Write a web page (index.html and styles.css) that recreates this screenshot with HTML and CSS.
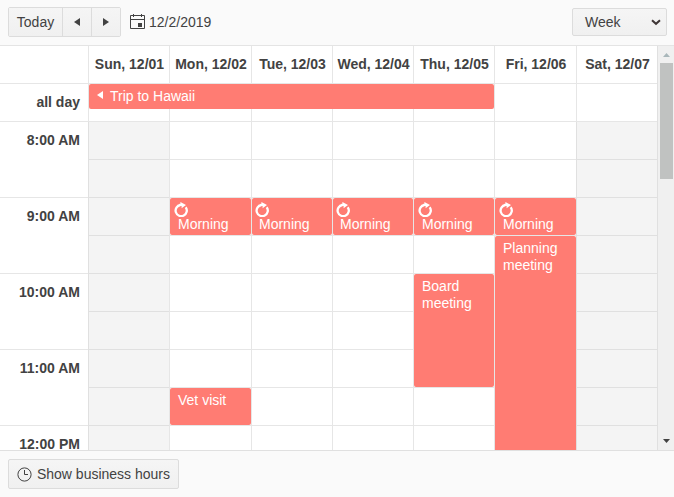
FILE: index.html
```html
<!DOCTYPE html>
<html lang="en">
<head>
<meta charset="utf-8">
<title>Scheduler</title>
<link rel="stylesheet" href="styles.css">
</head>
<body>
<svg class="defs" width="0" height="0" aria-hidden="true">
  <symbol id="reload" viewBox="0 0 14 15">
    <path d="M11.7 5.2A5.6 5.6 0 1 1 6.4 3" fill="none" stroke="currentColor" stroke-width="2.3"/>
    <path d="M6.4 0L12 2.9L7.6 6.2V4.1H5V2L6.4 1.8Z" fill="currentColor"/>
  </symbol>
</svg>
<div class="scheduler">
  <header class="toolbar">
    <div class="nav">
      <button class="btn today">Today</button>
      <button class="btn arrow"><svg width="6" height="8" viewBox="0 0 6 8"><path d="M6 0v8L0 4z"/></svg></button>
      <button class="btn arrow"><svg width="6" height="8" viewBox="0 0 6 8"><path d="M0 0v8l6-4z"/></svg></button>
    </div>
    <svg class="calendar" width="15" height="16" viewBox="0 0 15 16"><path d="M.5 1.5h14v13H.5zM.5 5.5h14" fill="none" stroke="#424242"/><path d="M3 0h1v3H3zM11 0h1v3h-1zM2 1h3v1H2zM10 1h3v1h-3zM8 9h4v4H8z" fill="#424242"/></svg>
    <span class="date">12/2/2019</span>
    <div class="view"><span>Week</span><svg width="10" height="7" viewBox="0 0 10 7"><path d="M1 1.2l4 3.6 4-3.6" fill="none" stroke="#3f3636" stroke-width="2"/></svg></div>
  </header>
  <main class="content">
    <div class="stage">
      <div class="layer cells">
        <div class="corner"></div>
        <div class="head">Sun, 12/01</div><div class="head">Mon, 12/02</div><div class="head">Tue, 12/03</div><div class="head">Wed, 12/04</div><div class="head">Thu, 12/05</div><div class="head">Fri, 12/06</div><div class="head">Sat, 12/07</div>
        <div class="time allday">all day</div>
        <i></i><i></i><i></i><i></i><i></i><i></i><i></i>
        <div class="time hour">8:00 AM</div>
        <i class="off"></i><i></i><i></i><i></i><i></i><i></i><i class="off"></i>
        <i class="off"></i><i></i><i></i><i></i><i></i><i></i><i class="off"></i>
        <div class="time hour">9:00 AM</div>
        <i class="off"></i><i></i><i></i><i></i><i></i><i></i><i class="off"></i>
        <i class="off"></i><i></i><i></i><i></i><i></i><i></i><i class="off"></i>
        <div class="time hour">10:00 AM</div>
        <i class="off"></i><i></i><i></i><i></i><i></i><i></i><i class="off"></i>
        <i class="off"></i><i></i><i></i><i></i><i></i><i></i><i class="off"></i>
        <div class="time hour">11:00 AM</div>
        <i class="off"></i><i></i><i></i><i></i><i></i><i></i><i class="off"></i>
        <i class="off"></i><i></i><i></i><i></i><i></i><i></i><i class="off"></i>
        <div class="time last">12:00 PM</div>
        <i class="off last"></i><i class="last"></i><i class="last"></i><i class="last"></i><i class="last"></i><i class="last"></i><i class="off last"></i>
      </div>
      <div class="layer">
        <div class="event trip"><svg width="6" height="8" viewBox="0 0 6 8"><path d="M6 0v8L0 4z"/></svg>Trip to Hawaii</div>
        <div class="event morning mon"><svg><use href="#reload"/></svg><span>Morning</span></div>
        <div class="event morning tue"><svg><use href="#reload"/></svg><span>Morning</span></div>
        <div class="event morning wed"><svg><use href="#reload"/></svg><span>Morning</span></div>
        <div class="event morning thu"><svg><use href="#reload"/></svg><span>Morning</span></div>
        <div class="event morning fri"><svg><use href="#reload"/></svg><span>Morning</span></div>
        <div class="event planning">Planning meeting</div>
        <div class="event board">Board meeting</div>
        <div class="event vet">Vet visit</div>
      </div>
    </div>
    <div class="scrollbar">
      <svg width="7" height="4" viewBox="0 0 7 4"><path d="M0 4h7L3.5 0z" fill="#a9b7ba"/></svg>
      <div class="thumb"></div>
      <svg class="down" width="7" height="4" viewBox="0 0 7 4"><path d="M0 0h7L3.5 4z" fill="#424242"/></svg>
    </div>
  </main>
  <footer class="footer">
    <button class="btn hours"><svg width="15" height="15" viewBox="0 0 15 15"><g fill="none" stroke="#424242"><circle cx="7.5" cy="7.5" r="6.6"/><path d="M7.5 3v4.5H11"/></g></svg>Show business hours</button>
  </footer>
</div>
</body>
</html>
```

FILE: styles.css
```css
* { box-sizing: border-box; }
body { margin: 0; font: 14px/17px "Liberation Sans", Arial, sans-serif; color: #424242; }
.defs { position: absolute; }
.scheduler { width: 674px; height: 497px; display: flex; flex-direction: column; overflow: hidden; background: #fff; }
.toolbar { flex: 0 0 46px; display: flex; align-items: flex-start; padding: 7px 7px 0 8px; background: #fafafa; border-bottom: 1px solid #e4e4e4; }
.nav { display: flex; border: 1px solid #dcdcdc; border-radius: 2px; height: 30px; }
.btn { font: inherit; color: inherit; padding: 0; border: 0; display: flex; align-items: center; justify-content: center; background: linear-gradient(#f5f5f5, #f0f0f0); }
.today { width: 53px; }
.arrow { width: 29px; border-left: 1px solid #dcdcdc; fill: #424242; }
.calendar { margin: 7px 4px 0 9px; }
.date { margin-top: 7px; }
.view { margin: 1px 0 0 auto; width: 95px; height: 28px; padding: 0 5px 0 12px; display: flex; align-items: center; justify-content: space-between; border: 1px solid #dcdcdc; border-radius: 2px; background: linear-gradient(#f5f5f5, #f0f0f0); }
.content { flex: 0 0 404px; display: flex; }
.stage { width: 657px; display: grid; }
.layer { grid-area: 1 / 1; display: grid; grid-template-columns: 88px 81px 82px 81px 81px 81px 82px 81px; grid-template-rows: repeat(10, 38px) 24px; }
.cells > * { border-bottom: 1px solid #e6e6e6; }
.cells > .last { border-bottom: 0; }
.cells > i, .head { border-left: 1px solid #e6e6e6; }
.cells > .off { background: #f4f4f4; border-color: #e0e0e0; }
.head { font-weight: bold; text-align: center; white-space: nowrap; padding: 10px 0 0 1px; }
.time { font-weight: bold; text-align: right; padding: 10px 8px 0 0; }
.hour { grid-row: span 2; }
.event { margin: 0 0 1px 1px; padding: 4px 8px; border-radius: 2px; background: #ff7c73; color: #fff; overflow: hidden; }
.trip { grid-area: 2 / 2 / 3 / 7; height: 25px; display: flex; gap: 7px; fill: #fff; }
.trip svg { margin-top: 3px; }
.morning { padding: 4px; }
.morning svg { display: block; width: 14px; height: 15px; }
.morning span { display: block; margin: -1px 0 0 4px; }
.mon { grid-area: 5 / 3; }
.tue { grid-area: 5 / 4; padding-left: 3px; }
.wed { grid-area: 5 / 5; padding-left: 3px; }
.thu { grid-area: 5 / 6; }
.fri { grid-area: 5 / 7; }
.planning { grid-area: 6 / 7 / 12 / 8; margin-bottom: 0; border-radius: 2px 2px 0 0; }
.board { grid-area: 7 / 6 / 10 / 7; }
.vet { grid-area: 10 / 3; }
.scrollbar { width: 17px; display: flex; flex-direction: column; align-items: center; padding: 7px 0 7px 1px; border-left: 1px solid #e0e0e0; background: #f0f0f0; }
.scrollbar svg { flex: none; }
.thumb { width: 13px; height: 116px; margin-top: 6px; background: #c0c2c1; }
.down { margin-top: auto; }
.footer { flex: 1; padding: 8px; background: #fafafa; border-top: 1px solid #e0e0e0; }
.hours { width: 171px; height: 30px; gap: 5px; border: 1px solid #dcdcdc; border-radius: 2px; }
```
